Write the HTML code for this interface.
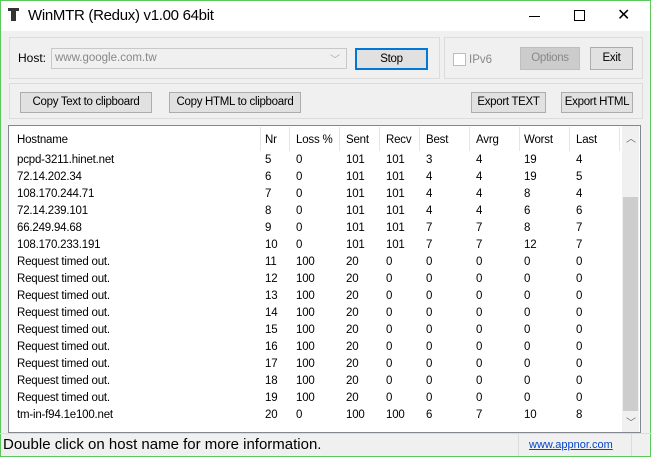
<!DOCTYPE html>
<html><head><style>
*{box-sizing:border-box;margin:0;padding:0}
body{width:651px;height:457px;overflow:hidden;background:#f0f0f0;font-family:"Liberation Sans",sans-serif;font-size:12px;color:#000;position:relative}
.a{position:absolute}
.win{left:0;top:0;width:651px;height:457px;border:1px solid #5cc85c}
.title{left:1px;top:1px;width:649px;height:30px;background:#fff}
.grp{border:1px solid #dcdcdc}
.btn{background:#e1e1e1;border:1px solid #adadad;text-align:center;line-height:18px;font-size:11.5px;letter-spacing:-0.3px;white-space:nowrap;overflow:hidden}
.t{position:absolute;white-space:nowrap;font-size:11.5px;letter-spacing:-0.2px}
</style></head><body>
<div class="a win"></div>
<div class="a title"></div>
<div class="a" style="left:8px;top:8px;width:11px;height:3px;background:#333"></div>
<div class="a" style="left:11px;top:10px;width:5px;height:11px;background:#333"></div>
<div class="a" style="left:28px;top:7px;font-size:15px;letter-spacing:-0.3px">WinMTR (Redux) v1.00 64bit</div>
<div class="a" style="left:529px;top:16px;width:11px;height:1px;background:#000"></div>
<div class="a" style="left:574px;top:10px;width:11px;height:11px;border:1px solid #000"></div>
<div class="a" style="left:617px;top:5px;font-size:16px;font-weight:200">✕</div>

<div class="a grp" style="left:9px;top:37px;width:431px;height:42px"></div>
<div class="a grp" style="left:444px;top:37px;width:199px;height:42px"></div>
<div class="a grp" style="left:9px;top:83px;width:634px;height:36px"></div>

<div class="a" style="left:18px;top:51px">Host:</div>
<div class="a" style="left:51px;top:48px;width:296px;height:21px;background:#f0f0f0;border:1px solid #c8c8c8;color:#888;padding:3px 3px;font-size:11.5px">www.google.com.tw</div>
<div class="a" style="left:330px;top:51px;color:#aaa;font-size:10px">﹀</div>
<div class="a btn" style="left:355px;top:48px;width:73px;height:22px;border:2px solid #0078d7;line-height:18px">Stop</div>
<div class="a" style="left:453px;top:53px;width:13px;height:13px;border:1px solid #bcbcbc;background:#fff"></div>
<div class="a" style="left:469px;top:54px;color:#888;font-size:11.5px">IPv6</div>
<div class="a btn" style="left:520px;top:47px;width:60px;height:23px;line-height:21px;background:#ccc;border-color:#bfbfbf;color:#888">Options</div>
<div class="a btn" style="left:590px;top:47px;width:43px;height:23px;line-height:21px">Exit</div>

<div class="a btn" style="left:20px;top:92px;width:132px;height:21px">Copy Text to clipboard</div>
<div class="a btn" style="left:169px;top:92px;width:132px;height:21px">Copy HTML to clipboard</div>
<div class="a btn" style="left:471px;top:92px;width:75px;height:21px">Export TEXT</div>
<div class="a btn" style="left:561px;top:92px;width:72px;height:21px">Export HTML</div>

<div class="a" style="left:8px;top:125px;width:633px;height:308px;background:#fff;border:1px solid #828790"></div>
<div class="a" style="left:622px;top:126px;width:17px;height:306px;background:#f0f0f0"></div>
<div class="a" style="left:623px;top:197px;width:15px;height:214px;background:#cdcdcd"></div>
<div class="a" style="left:626px;top:130px;color:#666;font-size:10px">︿</div>
<div class="a" style="left:626px;top:414px;color:#666;font-size:10px">﹀</div>
<div id="list"></div>

<div class="a" style="left:0;top:433px;width:651px;height:1px;background:#dcdcdc"></div>
<div class="a" style="left:3px;top:436px;font-size:15px">Double click on host name for more information.</div>
<div class="a" style="left:518px;top:434px;width:1px;height:22px;background:#dcdcdc"></div>
<div class="a" style="left:529px;top:439px;font-size:11px;color:#0645c8;text-decoration:underline">www.appnor.com</div>
<div class="a" style="left:631px;top:434px;width:1px;height:22px;background:#dcdcdc"></div>
<script>
var cols=[17,265,296,346,386,426,476,524,576];
var seps=[260,289,339,379,419,469,519,569,619];
var rows=[["Hostname","Nr","Loss %","Sent","Recv","Best","Avrg","Worst","Last"],
["pcpd-3211.hinet.net",5,0,101,101,3,4,19,4],
["72.14.202.34",6,0,101,101,4,4,19,5],
["108.170.244.71",7,0,101,101,4,4,8,4],
["72.14.239.101",8,0,101,101,4,4,6,6],
["66.249.94.68",9,0,101,101,7,7,8,7],
["108.170.233.191",10,0,101,101,7,7,12,7]];
for(var n=11;n<=19;n++)rows.push(["Request timed out.",n,100,20,0,0,0,0,0]);
rows.push(["tm-in-f94.1e100.net",20,0,100,100,6,7,10,8]);
var h="";
seps.forEach(function(x){h+='<div class="a" style="left:'+x+'px;top:127px;width:1px;height:24px;background:#e5e5e5"></div>';});
rows.forEach(function(r,i){var y=i==0?134:154+(i-1)*17;
r.forEach(function(v,j){h+='<div class="t" style="left:'+cols[j]+'px;top:'+y+'px">'+v+'</div>';});});
document.getElementById("list").innerHTML=h;
</script>
</body></html>
